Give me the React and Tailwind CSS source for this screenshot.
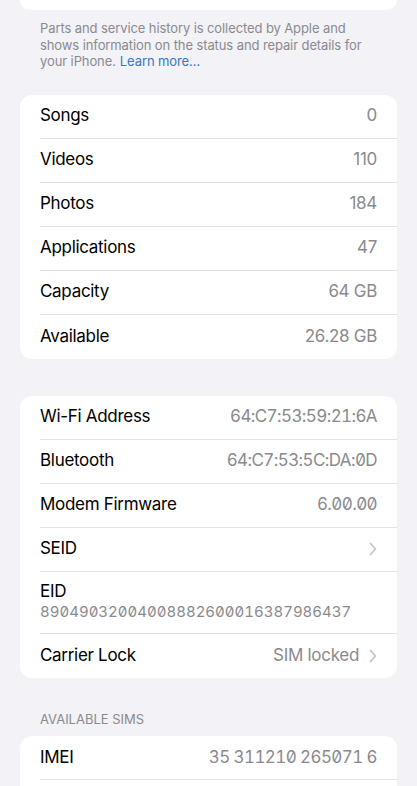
import React from "react";

const Chevron = () => (
  <svg width="8" height="14" viewBox="0 0 8 14" className="ml-[10px] shrink-0">
    <polyline points="1.5,1.5 6.5,7 1.5,12.5" fill="none" stroke="#c4c4c7" strokeWidth="1.8" strokeLinecap="round" strokeLinejoin="round" />
  </svg>
);

const Row = ({ label, value, mono, chevron, last }) => (
  <div className="pl-[20px]">
    <div className={"flex h-[44px] items-center pr-[20px] " + (last ? "" : "border-b border-[#e3e3e7]")}>
      <span className="text-[17px] text-black tracking-[-0.3px]">{label}</span>
      <span className={"ml-auto text-[17px] text-[#8a8a8e] " + (mono ? "tabular-nums slashed-zero tracking-[-0.6px]" : "tracking-[-0.3px]")}>{value}</span>
      {chevron && <Chevron />}
    </div>
  </div>
);

export default function App() {
  return (
    <div className="h-[786px] overflow-hidden bg-[#f2f2f7] px-[20px] font-['Inter','Liberation_Sans',sans-serif]">
      <div className="h-[10px] rounded-b-[12px] bg-white" />
      <div className="px-[20px] pt-[10px] text-[13px] leading-[16.5px] text-[#8a8a8e] tracking-[-0.1px]">
        <p>Parts and service history is collected by Apple and shows information on the status and repair details for</p>
        <div className="flex gap-[4px]">
          <span>your iPhone.</span>
          <span className="text-[#3478c6]">Learn more…</span>
        </div>
      </div>
      <div className="mt-[25px] rounded-[12px] bg-white">
        <Row label="Songs" value="0" />
        <Row label="Videos" value="110" />
        <Row label="Photos" value="184" />
        <Row label="Applications" value="47" />
        <Row label="Capacity" value="64 GB" />
        <Row label="Available" value="26.28 GB" last />
      </div>
      <div className="mt-[37px] rounded-[12px] bg-white">
        <Row label="Wi-Fi Address" value="64:C7:53:59:21:6A" mono />
        <Row label="Bluetooth" value="64:C7:53:5C:DA:0D" mono />
        <Row label="Modem Firmware" value="6.00.00" mono />
        <Row label="SEID" value="" chevron />
        <div className="pl-[20px]">
          <div className="flex h-[62px] flex-col justify-center border-b border-[#e3e3e7] pr-[20px]">
            <span className="text-[17px] leading-[22px] text-black tracking-[-0.3px] -mt-[2px]">EID</span>
            <span className="text-[15px] leading-[20px] text-[#8a8a8e] tabular-nums slashed-zero tracking-[0px]">89049032004008882600016387986437</span>
          </div>
        </div>
        <Row label="Carrier Lock" value="SIM locked" chevron last />
      </div>
      <div className="mt-[32px] px-[20px] pb-[7px] text-[13px] uppercase text-[#8a8a8e]">Available SIMs</div>
      <div className="rounded-[12px] bg-white">
        <Row label="IMEI" value="35 311210 265071 6" mono />
        <Row label="" value="" last />
      </div>
    </div>
  );
}
